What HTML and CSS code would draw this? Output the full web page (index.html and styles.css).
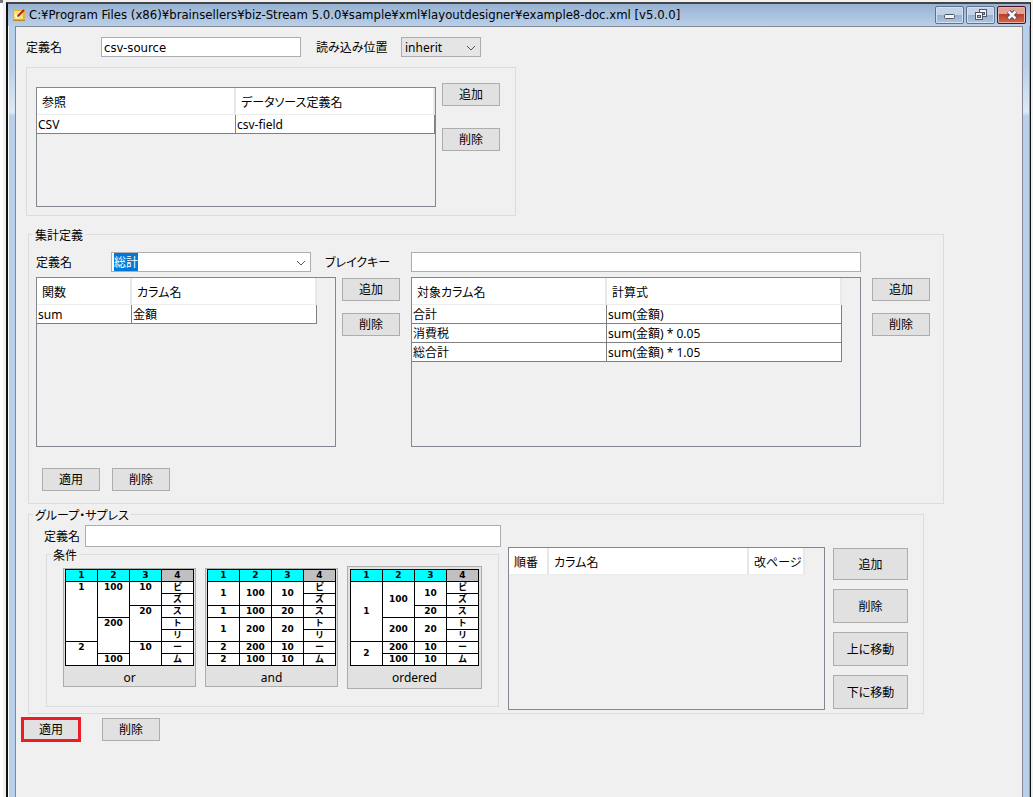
FILE: index.html
```html
<!DOCTYPE html>
<html lang="ja">
<head>
  <meta charset="UTF-8">
  <title>biz-Stream Layout Designer</title>
  <link rel="stylesheet" href="styles.css">
</head>
<body>
  <div class="edge"></div>
  <div class="window">
    <div class="titlebar">
      <svg class="app-icon" width="12" height="12" viewBox="0 0 12 12">
        <path d="M0 1h12v11H0z" fill="#e0b43c"/>
        <path d="M1 2h9v8H1z" fill="#f6e27a"/>
        <path d="M0 11h12v1H0z" fill="#b8862a"/>
        <path d="M2 6l3 3" stroke="#fffbe0" stroke-width="2"/>
        <path d="M5 7L11 1" stroke="#c02020" stroke-width="2"/>
        <path d="M4 8l1-2 1 1z" fill="#222"/>
      </svg>
      <div class="title">C:¥Program Files (x86)¥brainsellers¥biz-Stream 5.0.0¥sample¥xml¥layoutdesigner¥example8-doc.xml [v5.0.0]</div>
      <div class="window-buttons">
        <button class="win-btn" aria-label="最小化">
          <svg width="12" height="12" viewBox="0 0 12 12"><rect x="0.5" y="5.5" width="10" height="4" rx="1" fill="#f4f4f4" stroke="#4f5666"/></svg>
        </button>
        <button class="win-btn" aria-label="元に戻す">
          <svg width="12" height="12" viewBox="0 0 12 12">
            <rect x="4.5" y="0.5" width="7" height="7" fill="#f4f4f4" stroke="#4f5666"/>
            <rect x="7.5" y="3.5" width="2" height="2" fill="#9db5d2" stroke="#4f5666"/>
            <rect x="0.5" y="3.5" width="7" height="7" fill="#f4f4f4" stroke="#4f5666"/>
            <rect x="2.5" y="6.5" width="3" height="2" fill="#9db5d2" stroke="#4f5666"/>
          </svg>
        </button>
        <button class="win-btn close" aria-label="閉じる">
          <svg width="12" height="10" viewBox="0 0 12 10">
            <path d="M2.500 1.500L9.500 8.500M9.500 1.500L2.500 8.500" stroke="#4f4656" stroke-width="4.500"/>
            <path d="M2.500 1.500L9.500 8.500M9.500 1.500L2.500 8.500" stroke="#f4f4fa" stroke-width="2.500"/>
          </svg>
        </button>
      </div>
    </div>

    <div class="frame">
      <div class="content">
        <div class="row source-row">
          <label class="name-label" for="sourceName">定義名</label>
          <input class="w200 latin" type="text" id="sourceName" value="csv-source">
          <label class="position-label" for="position">読み込み位置</label>
          <div class="select-box">
            <select id="position"><option>inherit</option></select>
            <svg class="chevron" width="10" height="6" viewBox="0 0 10 6"><path d="M1 1l4 4 4-4" fill="none" stroke="#555"/></svg>
          </div>
        </div>

        <div class="group reference">
          <div class="panel w400">
            <table>
              <colgroup><col class="c199"><col class="c199"></colgroup>
              <thead><tr><th>参照</th><th>データソース定義名</th></tr></thead>
              <tbody><tr><td>CSV</td><td>csv-field</td></tr></tbody>
            </table>
          </div>
          <div class="side-buttons spread">
            <button class="btn">追加</button>
            <button class="btn">削除</button>
          </div>
        </div>

        <fieldset class="summary">
          <legend>集計定義</legend>
          <div class="summary-body">
            <div class="row">
              <label class="name-label" for="summaryName">定義名</label>
              <div class="select-box">
                <input class="w200" type="text" id="summaryName" value="総計" autofocus onfocus="this.select()">
                <svg class="chevron" width="10" height="6" viewBox="0 0 10 6"><path d="M1 1l4 4 4-4" fill="none" stroke="#555"/></svg>
              </div>
              <label class="break-label" for="breakKey">ブレイクキー</label>
              <input class="w450" type="text" id="breakKey">
            </div>
            <div class="tables">
              <div class="panel tall w300">
                <table>
                  <colgroup><col class="c95"><col class="c185"></colgroup>
                  <thead><tr><th>関数</th><th>カラム名</th></tr></thead>
                  <tbody><tr><td>sum</td><td>金額</td></tr></tbody>
                </table>
              </div>
              <div class="side-buttons">
                <button class="btn">追加</button>
                <button class="btn">削除</button>
              </div>
              <div class="panel tall w450 second">
                <table>
                  <colgroup><col class="c195"><col class="c235"></colgroup>
                  <thead><tr><th>対象カラム名</th><th>計算式</th></tr></thead>
                  <tbody>
                    <tr><td>合計</td><td>sum(金額)</td></tr>
                    <tr><td>消費税</td><td>sum(金額) * 0.05</td></tr>
                    <tr><td>総合計</td><td>sum(金額) * 1.05</td></tr>
                  </tbody>
                </table>
              </div>
              <div class="side-buttons last">
                <button class="btn">追加</button>
                <button class="btn">削除</button>
              </div>
            </div>
            <div class="row actions">
              <button class="btn">適用</button>
              <button class="btn">削除</button>
            </div>
          </div>
        </fieldset>

        <fieldset class="suppress">
          <legend>グループ・サプレス</legend>
          <div class="suppress-body">
            <div class="suppress-left">
              <div class="row">
                <label class="short-label" for="groupName">定義名</label>
                <input class="group-name" type="text" id="groupName">
              </div>
              <fieldset class="condition">
                <legend>条件</legend>
                <div class="samples">
                  <button class="sample">
                    <span class="grid top">
                      <span class="head">1</span><span class="r5">1</span><span class="r2">2</span>
                      <span class="head">2</span><span class="r3">100</span><span class="r3">200</span><span>100</span>
                      <span class="head">3</span><span class="r2">10</span><span class="r3">20</span><span class="r2">10</span>
                      <span class="head gray">4</span><span>ビ</span><span>ズ</span><span>ス</span><span>ト</span><span>リ</span><span>ー</span><span>ム</span>
                    </span>
                    <span class="caption">or</span>
                  </button>
                  <button class="sample">
                    <span class="grid">
                      <span class="head">1</span><span class="r2">1</span><span>1</span><span class="r2">1</span><span>2</span><span>2</span>
                      <span class="head">2</span><span class="r2">100</span><span>100</span><span class="r2">200</span><span>200</span><span>100</span>
                      <span class="head">3</span><span class="r2">10</span><span>20</span><span class="r2">20</span><span>10</span><span>10</span>
                      <span class="head gray">4</span><span>ビ</span><span>ズ</span><span>ス</span><span>ト</span><span>リ</span><span>ー</span><span>ム</span>
                    </span>
                    <span class="caption">and</span>
                  </button>
                  <button class="sample large">
                    <span class="grid">
                      <span class="head">1</span><span class="r5">1</span><span class="r2">2</span>
                      <span class="head">2</span><span class="r3">100</span><span class="r2">200</span><span>200</span><span>100</span>
                      <span class="head">3</span><span class="r2">10</span><span>20</span><span class="r2">20</span><span>10</span><span>10</span>
                      <span class="head gray">4</span><span>ビ</span><span>ズ</span><span>ス</span><span>ト</span><span>リ</span><span>ー</span><span>ム</span>
                    </span>
                    <span class="caption">ordered</span>
                  </button>
                </div>
              </fieldset>
            </div>
            <div class="panel order-panel">
              <table>
                <colgroup><col class="c40"><col class="c200"><col class="c56"></colgroup>
                <thead><tr><th>順番</th><th>カラム名</th><th>改ページ</th></tr></thead>
              </table>
            </div>
            <div class="order-buttons">
              <button class="btn">追加</button>
              <button class="btn">削除</button>
              <button class="btn">上に移動</button>
              <button class="btn">下に移動</button>
            </div>
          </div>
        </fieldset>

        <div class="row footer">
          <button class="btn marked">適用</button>
          <button class="btn">削除</button>
        </div>
      </div>
    </div>
  </div>
</body>
</html>
```
FILE: styles.css
```css
* {
  box-sizing: border-box;
}

body {
  margin: 0;
  height: 100vh;
  overflow: hidden;
  display: flex;
  background-color: #f0f0f0;
  color: #000;
  font-family: 'Noto Sans', 'Noto Sans CJK JP', sans-serif;
  font-size: 12px;
  line-height: 16px;
  font-feature-settings: 'palt';
}

input, select, button {
  font: inherit;
  font-feature-settings: inherit;
  color: inherit;
  margin: 0;
}

.edge {
  width: 3px;
  margin-right: 3px;
  background-color: white;
  border-top: 3px solid #777;
}

/* window frame */

.window {
  flex: 1;
  min-width: 0;
  margin: 2px 2px 0 0;
  border: 0 solid #111;
  border-width: 2px 1px 0 2px;
  border-top-color: #444;
  display: flex;
  flex-direction: column;
}

.titlebar {
  height: 22px;
  display: flex;
  align-items: center;
  padding: 0 4px 0 5px;
  background: linear-gradient(#97b2d2, #b9d0ea);
}

.title {
  flex: 1;
  margin-left: 4px;
  font-family: 'DejaVu Sans Condensed', 'DejaVu Sans', sans-serif;
  font-size: 13px;
  white-space: nowrap;
}

.window-buttons {
  display: flex;
  gap: 2px;
}

.win-btn {
  width: 29px;
  height: 18px;
  padding: 0;
  display: flex;
  align-items: center;
  justify-content: center;
  border: 1px solid #5f7391;
  border-radius: 2px;
  box-shadow: inset 0 0 0 1px #d3e0f0;
  background: linear-gradient(#c2d3e8 50%, #98b1cf 50%, #aec5e0);
}

.win-btn.close {
  border-color: #4b1420;
  box-shadow: inset 0 0 0 1px #eab0a8;
  background: linear-gradient(#e3a296 45%, #b93e26 45%, #d06a50);
}

.frame {
  flex: 1;
  min-height: 0;
  display: flex;
  padding: 0 6px;
  border-left: 1px solid white;
  border-right: 1px solid #22c4f0;
  background: linear-gradient(#b9d0ea, #b9d0ea 40px, #dde9f6 86px, #b9d0ea 90px);
}

.content {
  flex: 1;
  min-width: 0;
  padding: 10px 6px;
  border: 1px solid #828790;
  border-bottom: none;
  background-color: #f0f0f0;
}

/* controls */

.row {
  display: flex;
  align-items: center;
}

label {
  padding-top: 2px;
}

input {
  height: 20px;
  padding: 0 2px;
  border: 1px solid #abadb3;
  background-color: white;
  outline: none;
}

input::selection {
  background-color: #0078d7;
  color: white;
}

.latin {
  font-family: 'DejaVu Sans Condensed', 'DejaVu Sans', sans-serif;
  font-size: 13px;
}

.w200 {
  width: 200px;
}

.w300 {
  width: 300px;
}

.w400 {
  width: 400px;
}

.w450 {
  width: 450px;
}

.select-box {
  position: relative;
  display: flex;
}

select {
  width: 80px;
  height: 20px;
  padding: 1px 3px 0;
  border: 1px solid #adadad;
  border-radius: 0;
  background-color: #e5e5e5;
  appearance: none;
}

.chevron {
  position: absolute;
  right: 5px;
  top: 8px;
  pointer-events: none;
}

.name-label {
  width: 75px;
}

.position-label {
  width: 85px;
  margin-left: 15px;
}

.break-label {
  width: 86px;
  margin-left: 14px;
}

.short-label {
  width: 41px;
}

.btn {
  width: 58px;
  height: 23px;
  padding: 1px 0 0;
  border: 1px solid #adadad;
  background-color: #e1e1e1;
}

.marked {
  outline: 3px solid #ed1c24;
  outline-offset: -2px;
}

.side-buttons {
  display: flex;
  flex-direction: column;
  gap: 12px;
  margin: 1px 0 0 6px;
}

/* tables */

.panel {
  height: 120px;
  border: 1px solid #828790;
}

.panel.tall {
  height: 170px;
}

table {
  table-layout: fixed;
  width: 0;
  border-collapse: separate;
  border-spacing: 0;
}

th {
  height: 27px;
  padding: 4px 0 0 5px;
  border-right: 2px solid #e8e8e8;
  border-bottom: 1px solid #ececec;
  background-color: white;
  font-weight: normal;
  text-align: left;
  white-space: nowrap;
}

td {
  height: 19px;
  padding: 2px 1px 0;
  border-right: 1px solid #808080;
  border-bottom: 1px solid #808080;
  background-color: white;
  white-space: nowrap;
}

.c40 { width: 40px; }
.c56 { width: 56px; }
.c95 { width: 95px; }
.c185 { width: 185px; }
.c195 { width: 195px; }
.c199 { width: 199px; }
.c200 { width: 200px; }
.c235 { width: 235px; }

/* groups */

.source-row {
  margin-left: 4px;
}

.group {
  width: 490px;
  height: 149px;
  margin: 10px 0 0 4px;
  padding: 15px 9px 0;
  border: 1px solid #dcdcdc;
  display: flex;
}

.group .panel {
  margin-top: 4px;
}

.side-buttons.spread {
  gap: 22px;
  margin-top: 0;
}

fieldset {
  min-width: 0;
  margin: 0;
  padding: 0 4px;
  border: 1px solid #dcdcdc;
}

legend {
  height: 13px;
  padding: 0 2px;
  line-height: 15px;
}

.summary {
  width: 916px;
  margin: 12px 0 0 6px;
}

.summary-body {
  padding: 11px 3px 12px;
}

.tables {
  display: flex;
  align-items: flex-start;
  margin-top: 5px;
}

.second {
  margin-left: 11px;
}

.side-buttons.last {
  margin-left: 11px;
}

.actions {
  gap: 12px;
  margin: 21px 0 0 6px;
}

.suppress {
  width: 896px;
  margin: 4px 0 0 6px;
}

.suppress-body {
  display: flex;
  align-items: flex-start;
  padding: 4px 0 3px 11px;
}

.group-name {
  width: 416px;
  height: 22px;
}

.condition {
  width: 453px;
  margin: 1px 0 0 2px;
}

.samples {
  display: flex;
  align-items: center;
  gap: 9px;
  padding: 5px 0 17px 12px;
}

.sample {
  width: 133px;
  height: 119px;
  padding: 0 1px;
  border: 1px solid #adadad;
  background-color: #e1e1e1;
  display: flex;
  flex-direction: column;
  align-items: center;
}

.sample.large {
  width: 135px;
  height: 123px;
  padding: 2px;
}

.caption {
  margin-top: 4px;
}

/* sample grid, filled column by column */

.grid {
  width: 129px;
  padding: 1px;
  display: grid;
  grid-auto-flow: column;
  grid-template-rows: repeat(8, 11px);
  grid-template-columns: repeat(4, 31px);
  gap: 1px;
  background-color: black;
  font-family: 'DejaVu Sans', 'Noto Sans CJK JP', sans-serif;
  font-size: 9px;
  font-weight: bold;
  line-height: 11px;
}

.grid span {
  display: flex;
  align-items: center;
  justify-content: center;
  overflow: hidden;
  background-color: white;
}

.grid.top span {
  align-items: flex-start;
}

.grid .head {
  background-color: cyan;
}

.grid .gray {
  background-color: #c0c0c0;
}

.grid .r2 {
  grid-row: span 2;
}

.grid .r3 {
  grid-row: span 3;
}

.grid .r5 {
  grid-row: span 5;
}

.order-panel {
  width: 317px;
  height: 163px;
  margin: 22px 0 0 7px;
}

.order-buttons {
  display: grid;
  grid-template-rows: 32px 34px 34px 34px;
  gap: 9px;
  margin: 23px 0 0 8px;
}

.order-buttons .btn {
  width: 75px;
  height: auto;
}

.footer {
  gap: 22px;
  margin-top: 4px;
}
```
